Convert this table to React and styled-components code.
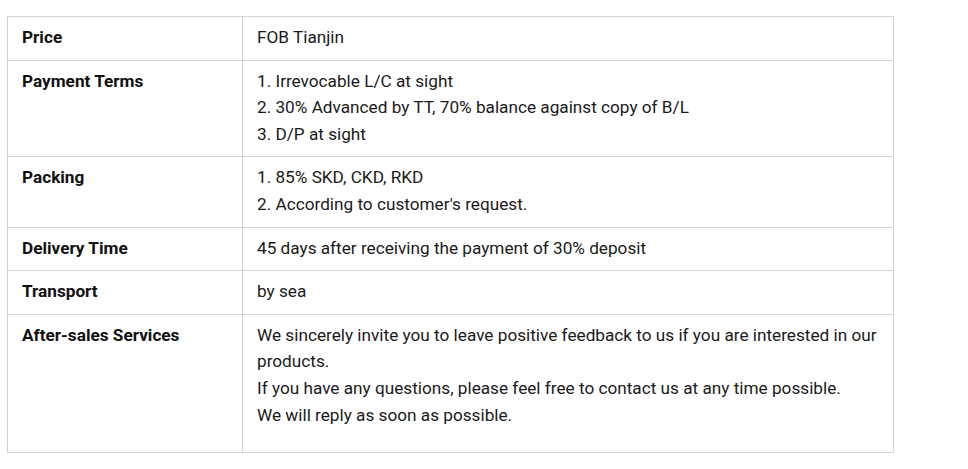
import styled, { createGlobalStyle } from "styled-components";

const GlobalStyle = createGlobalStyle`
  body {
    margin: 0;
    background: #ffffff;
    font-family: Roboto, "Liberation Sans", Arial, sans-serif;
  }
`;

const Page = styled.div`
  padding: 16px 0 0 7px;
`;

const Table = styled.table`
  width: 887px;
  table-layout: fixed;
  border-collapse: collapse;
  font-size: 17.2px;
  line-height: 26.6px;
  color: #1a1a1a;
`;

const Row = styled.tr``;

const Label = styled.th`
  width: 206px;
  text-align: left;
  vertical-align: top;
  font-weight: 700;
  color: #111;
  padding: 7px 14px 9px 14px;
  border: 1px solid #d3d3d3;
`;

const Value = styled.td`
  text-align: left;
  vertical-align: top;
  font-weight: 400;
  padding: 7px 14px ${(p) => (p.$extra ? "24px" : "9px")} 14px;
  border: 1px solid #d3d3d3;
`;

const Line = styled.div``;

const rows = [
  { label: "Price", lines: ["FOB Tianjin"] },
  {
    label: "Payment Terms",
    lines: [
      "1. Irrevocable L/C at sight",
      "2. 30% Advanced by TT, 70% balance against copy of B/L",
      "3. D/P at sight",
    ],
  },
  {
    label: "Packing",
    lines: ["1. 85% SKD, CKD, RKD", "2. According to customer's request."],
  },
  {
    label: "Delivery Time",
    lines: ["45 days after receiving the payment of 30% deposit"],
  },
  { label: "Transport", lines: ["by sea"] },
  {
    label: "After-sales Services",
    extra: true,
    lines: [
      "We sincerely invite you to leave positive feedback to us if you are interested in our products.",
      "If you have any questions, please feel free to contact us at any time possible.",
      "We will reply as soon as possible.",
    ],
  },
];

function App() {
  return (
    <Page>
      <GlobalStyle />
      <Table>
        <tbody>
          {rows.map((r) => (
            <Row key={r.label}>
              <Label>{r.label}</Label>
              <Value $extra={r.extra}>
                {r.lines.map((l) => (
                  <Line key={l}>{l}</Line>
                ))}
              </Value>
            </Row>
          ))}
        </tbody>
      </Table>
    </Page>
  );
}

export default App;
